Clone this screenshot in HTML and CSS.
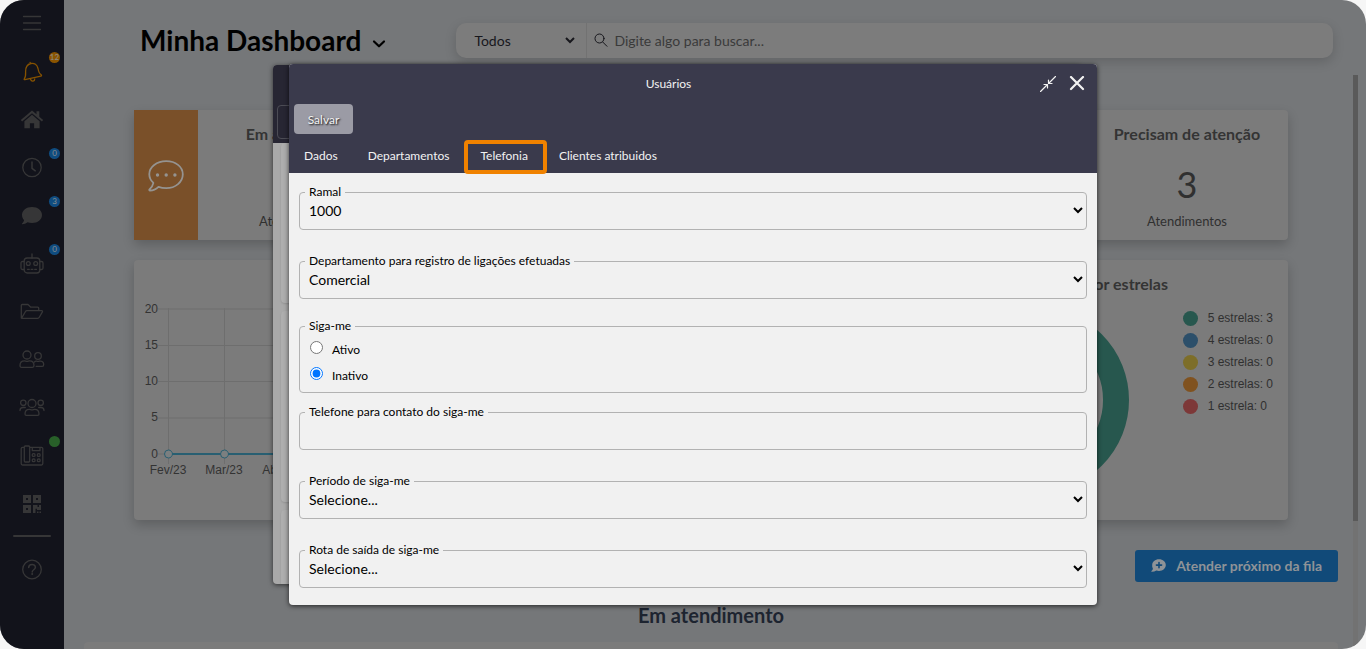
FILE: index.html
```html
<!DOCTYPE html>
<html lang="pt-BR">
<head>
<meta charset="utf-8">
<meta name="viewport" content="width=device-width, initial-scale=1">
<title>Minha Dashboard</title>
<link rel="stylesheet" href="styles.css">
</head>
<body>
<div class="app">
  <nav class="sidebar" aria-label="Principal">
    <button class="nav-item" aria-label="Menu"><svg width="24" height="24" viewBox="0 0 24 24"><path d="M3.500 4.500h17M3.500 11h17M3.500 17.500h17"/></svg></button>
    <button class="nav-item nav-item--alert" aria-label="Notificações"><svg width="24" height="24" viewBox="0 0 24 24"><path d="M4.300 18.800c1.600-2 1.400-4.300 1.300-7.200C5.500 7 7.500 4.300 10.800 3.500c3.600-.8 6.400 1.200 7.200 5 .6 3.200 1 5.200 3.200 6.300.6.400.3 1.300-.3 1.400L5 19.700c-.6.100-1.100-.4-.7-.9zM10.300 3.500l-.2-1.200M10.500 19.200c1 3 4.300 2.300 4.300-.8"/></svg><span class="badge badge--orange">12</span></button>
    <button class="nav-item" aria-label="Início"><svg width="24" height="24" viewBox="0 0 24 24"><path class="fill" d="M12 2.500 16.500 6.300V3.300h2.800v5.400l3.900 3.300-1.300 1.500L12 5.200l-9.900 8.300L.8 12z"/><path class="fill" d="M12 6.800l7.600 6.400v7.100h-5.500v-5H9.900v5H4.400v-7.100z"/></svg></button>
    <button class="nav-item" aria-label="Espera"><svg width="24" height="24" viewBox="0 0 24 24"><circle cx="12" cy="11.500" r="9.200"/><path d="M12 6v6.300l3.300 2.500" stroke-width="1.500"/></svg><span class="badge">0</span></button>
    <button class="nav-item" aria-label="Conversas"><svg width="24" height="24" viewBox="0 0 24 24"><path class="fill" d="M12 3c5.700 0 10 3.500 10 8s-4.300 8-10 8c-1.600 0-3.100-.3-4.400-.8C6 19.500 4 20.200 2.300 20.200c-.4 0-.5-.4-.2-.7 1-.9 1.700-2 2-3.200C2.800 14.800 2 13 2 11c0-4.500 4.300-8 10-8z"/></svg><span class="badge">3</span></button>
    <button class="nav-item" aria-label="Robôs"><svg width="24" height="24" viewBox="0 0 24 24"><path d="M12 2v4"/><rect x="4.200" y="6" width="15.600" height="15" rx="3"/><path d="M4 9.500H2.500c-.9 0-1.500.6-1.500 1.500v5c0 .9.600 1.500 1.500 1.500H4M20 9.500h1.500c.9 0 1.500.6 1.500 1.500v5c0 .9-.6 1.500-1.500 1.500H20"/><circle cx="8.300" cy="11.500" r="1.900"/><circle cx="15.700" cy="11.500" r="1.900"/><path d="M7.500 17.300h1.800M11.100 17.300h1.800M14.700 17.300h1.800"/></svg><span class="badge">0</span></button>
    <button class="nav-item" aria-label="Arquivos"><svg width="24" height="24" viewBox="0 0 24 24"><path d="M1.300 18V5.500C1.300 4.900 1.700 4.500 2.300 4.500H8l2.800 2.700h6.900c.6 0 1 .4 1 1v2.500M1.600 18.200l3.900-6.700c.3-.5.700-.8 1.300-.8h14.900c.7 0 1 .6.700 1.200l-3.100 5.400c-.4.700-.8 1-1.600 1H2.300c-.5 0-.8 0-.7-.1z"/></svg></button>
    <button class="nav-item" aria-label="Usuários"><svg width="26" height="24" viewBox="0 0 26 24"><circle cx="8" cy="7" r="4"/><path d="M1 17.500c0-3 1.800-4.600 4.500-4.600.9 0 1.500.5 2.500.5s1.600-.5 2.500-.5c2.700 0 4.500 1.600 4.500 4.600 0 1.200-.5 1.800-1.500 1.800h-11c-1 0-1.500-.6-1.500-1.800z"/><circle cx="19" cy="8" r="3.300"/><path d="M15.500 14c.6-.7 1.300-1 2-.8 1 .3 2 .3 3 0 2.500-.4 4.200 1 4.200 3.300 0 1.300-.4 1.900-1.500 1.900h-6"/></svg></button>
    <button class="nav-item" aria-label="Grupos"><svg width="26" height="24" viewBox="0 0 26 24"><circle cx="13" cy="7.500" r="4"/><path d="M6 18c0-3 1.800-4.600 4.300-4.600.9 0 1.700.5 2.700.5s1.800-.5 2.700-.5C18.200 13.400 20 15 20 18c0 .9-.4 1.300-1.200 1.300H7.200C6.400 19.300 6 18.900 6 18z"/><circle cx="4.300" cy="6.800" r="2.700"/><circle cx="21.700" cy="6.800" r="2.700"/><path d="M1 14.500c0-2 1-3 3-3h2.300M25 14.500c0-2-1-3-3-3h-2.300"/></svg></button>
    <button class="nav-item" aria-label="Telefonia"><svg width="24" height="24" viewBox="0 0 24 24"><rect x="4.300" y="2" width="5.400" height="16" rx="1"/><path d="M4 3.300H2.600C1.700 3.300 1.200 3.900 1.200 4.700V19.500c0 .9.500 1.500 1.400 1.500H21.400c.9 0 1.400-.6 1.400-1.500V4.700c0-.8-.5-1.400-1.400-1.400H10M12.300 3.500v3.200h7.700V3.500"/><rect x="12.300" y="9.700" width="2.700" height="2.700" rx="1"/><rect x="17.400" y="9.700" width="2.700" height="2.700" rx="1"/><rect x="12.300" y="15" width="2.700" height="2.700" rx="1"/><rect x="17.400" y="15" width="2.700" height="2.700" rx="1"/></svg><span class="badge badge--green"></span></button>
    <button class="nav-item" aria-label="QR Code"><svg width="24" height="24" viewBox="0 0 24 24"><path class="fill" fill-rule="evenodd" d="M3 3h8v8H3zM6 6v2h2V6zM13 3h8v8h-8zM16 6v2h2V6zM3 13h8v8H3zM6 16v2h2v-2zM13 13h4.500v2H19v-2h2v5h-4v-1.300h-1.500V21H13zM17 19.500h1.500V21H17zM19.500 19.500H21V21h-1.500z"/></svg></button>
    <hr class="nav-divider">
    <button class="nav-item" aria-label="Ajuda"><svg width="24" height="24" viewBox="0 0 24 24"><circle cx="12" cy="12.500" r="9.300"/><path d="M8.700 10.500c0-4 6.700-4 6.700-.2 0 2.500-3.200 2.400-3.200 4.700" stroke-width="1.500"/><circle class="fill" cx="12.200" cy="17" r="1"/></svg></button>
  </nav>

  <main class="main">
    <header class="topbar">
      <h1 class="title">Minha Dashboard</h1>
      <button class="title-toggle" aria-label="Trocar dashboard"><svg width="14" height="10" viewBox="0 0 14 10"><path d="M2 2.500l5 4.800 5-4.800"/></svg></button>
      <form class="search" role="search">
        <select class="search-scope" aria-label="Escopo da busca"><option>Todos</option></select>
        <label class="search-box"><svg width="14" height="14" viewBox="0 0 14 14"><circle cx="5.500" cy="5.500" r="4.500"/><path d="M8.700 9l4.300 4.300"/></svg><input type="text" placeholder="Digite algo para buscar..." aria-label="Buscar"></label>
      </form>
    </header>

    <section class="panels">
      <div class="stats">
        <article class="stat">
          <div class="stat-icon"><svg width="36" height="32" viewBox="0 0 36 32"><path d="M18.200 1.200C8.700 1.200 1.300 7 1.300 14.200c0 3.300 1.500 6.300 4.100 8.600-.5 2.600-2 4.800-3.900 6.500-.5.500-.2 1.200.5 1.200 3.300 0 6.300-1.600 8.500-3.700 2.300.9 4.900 1.400 7.700 1.400 9.400 0 16.600-6.200 16.600-13.900S27.600 1.200 18.200 1.200z"/><g class="dots"><circle cx="9.500" cy="15" r="1.700"/><circle cx="18.200" cy="15" r="1.700"/><circle cx="26.900" cy="15" r="1.700"/></g></svg></div>
          <div class="stat-body"><h2>Em andamento</h2><strong>0</strong><span>Atendimentos</span></div>
        </article>
        <article class="stat"></article>
        <article class="stat"></article>
        <article class="stat">
          <div class="stat-icon"></div>
          <div class="stat-body"><h2>Precisam de atenção</h2><strong>3</strong><span>Atendimentos</span></div>
        </article>
      </div>
      <div class="charts">
        <article class="card">
          <svg class="line-chart" height="260">
            <path class="grid" d="M24 49H540M24 85.500H540M24 121.500H540M24 158H540M24 194H540M34.500 48v156M90.500 48v156M146.500 48v156"/>
            <path class="series" d="M34.500 194H540"/>
            <circle class="point" cx="34.500" cy="194" r="4"/><circle class="point" cx="90.500" cy="194" r="4"/><circle class="point" cx="146.500" cy="194" r="4"/>
            <g text-anchor="end"><text x="24" y="53">20</text><text x="24" y="89">15</text><text x="24" y="125">10</text><text x="24" y="161">5</text><text x="24" y="198">0</text></g>
            <g text-anchor="middle"><text x="34" y="214">Fev/23</text><text x="90" y="214">Mar/23</text><text x="146" y="214">Abr/23</text></g>
          </svg>
        </article>
        <article class="card rating">
          <h2>por estrelas</h2>
          <div class="rating-body">
            <svg width="186" height="186" viewBox="0 0 186 186"><circle class="ring" cx="93" cy="93" r="80"/></svg>
            <ul class="legend">
              <li class="s5">5 estrelas: 3</li>
              <li class="s4">4 estrelas: 0</li>
              <li class="s3">3 estrelas: 0</li>
              <li class="s2">2 estrelas: 0</li>
              <li class="s1">1 estrela: 0</li>
            </ul>
          </div>
        </article>
      </div>
    </section>

    <section class="queue">
      <button class="next"><svg width="15" height="13" viewBox="0 0 15 13"><path class="bubble" d="M8 .3c3.900 0 6.800 2.500 6.800 5.800S11.900 12 8 12c-.9 0-1.800-.1-2.600-.4-1.300.8-2.900 1.200-4.600 1.200-.5 0-.6-.4-.3-.7.800-.7 1.300-1.500 1.400-2.400A5.500 5.500 0 0 1 1.200 6.100C1.200 2.800 4.100.3 8 .3z"/><path class="plus" d="M8 3.500v5.200M5.400 6.100h5.200"/></svg>Atender próximo da fila</button>
      <h2>Em atendimento</h2>
      <div class="list-panel"></div>
    </section>
    <div class="scroll-track"><div class="scroll-thumb"></div></div>
  </main>

  <div class="window-back"><div class="window-back-head"><span class="window-back-button"></span></div><div class="window-back-body"><i></i><i></i><i></i></div></div>

  <section class="modal" role="dialog" aria-labelledby="modal-title">
    <header class="modal-head">
      <div class="modal-bar">
        <h2 id="modal-title">Usuários</h2>
        <button class="modal-icon" aria-label="Recolher"><svg width="16" height="16" viewBox="0 0 16 16"><path d="M.5 15.500L7 9M15.500.5L9 7" stroke-width="1.200"/><path d="M4 8.500H7.500V12M8.500 4V7.500H12" stroke-width="1.200"/></svg></button>
        <button class="modal-icon" aria-label="Fechar"><svg width="16" height="16" viewBox="0 0 16 16"><path d="M2 1l12 12M14 1L2 13" stroke-width="2.200"/></svg></button>
      </div>
      <button class="save">Salvar</button>
      <div class="tabs" role="tablist">
        <button class="tab" role="tab">Dados</button>
        <button class="tab" role="tab">Departamentos</button>
        <button class="tab tab--marked" role="tab" aria-selected="true">Telefonia</button>
        <button class="tab" role="tab">Clientes atribuidos</button>
      </div>
    </header>
    <form class="form">
      <fieldset class="field"><legend><label for="ramal">Ramal</label></legend><select id="ramal"><option>1000</option></select></fieldset>
      <fieldset class="field field--close"><legend><label for="depto">Departamento para registro de ligações efetuadas</label></legend><select id="depto"><option>Comercial</option></select></fieldset>
      <fieldset class="field field--radios"><legend>Siga-me</legend>
        <label class="radio"><input type="radio" name="siga">Ativo</label>
        <label class="radio"><input type="radio" name="siga" checked>Inativo</label>
      </fieldset>
      <fieldset class="field"><legend><label for="tel">Telefone para contato do siga-me</label></legend><input id="tel" class="text" type="text"></fieldset>
      <fieldset class="field"><legend><label for="periodo">Período de siga-me</label></legend><select id="periodo"><option>Selecione...</option></select></fieldset>
      <fieldset class="field"><legend><label for="rota">Rota de saída de siga-me</label></legend><select id="rota"><option>Selecione...</option></select></fieldset>
    </form>
  </section>
</div>
</body>
</html>
```
FILE: styles.css
```css
* { box-sizing: border-box; }
body { margin: 0; background: #f6f6f6; font-family: Lato, sans-serif; font-size: 14px; color: #303030; }
h1, h2, ul { margin: 0; padding: 0; }
button, input, select { font: inherit; color: inherit; }
button { border: 0; background: none; padding: 0; }
svg { display: block; fill: none; stroke: currentColor; stroke-linecap: round; stroke-linejoin: round; }

.app { position: relative; display: flex; height: 100vh; overflow: hidden; border-radius: 24px; background: #757779; }

.sidebar { flex: none; display: flex; flex-direction: column; width: 64px; background: #12131b; color: #363637; }
.nav-item { position: relative; display: grid; place-items: center; height: 48px; }
.nav-item svg { stroke-width: 1.300; }
.nav-item .fill { fill: currentColor; stroke: none; }
.nav-item--alert { color: #855200; }
.nav-divider { width: 38px; height: 2px; margin: 7px auto 8px; border: 0; border-radius: 1px; background: #363637; }
.badge { position: absolute; top: 4px; right: 4px; width: 11px; height: 11px; border-radius: 50%; background: #0f4c80; color: #8c8c8c; font-size: 8px; line-height: 11px; text-align: center; }
.badge--orange { background: #8a5400; }
.badge--green { background: #286029; }

.main { position: relative; flex: 1; min-width: 0; }
.topbar { display: flex; align-items: center; padding: 23px 33px 0 76px; }
.title { color: #000; font-size: 28px; line-height: 35px; }
.title-toggle { margin: 6px 70px 0 11px; color: #000; }
.title-toggle svg { stroke-width: 2.200; }
.search { flex: 1; display: flex; height: 35px; border-radius: 10px; background: #7c7c7c; box-shadow: 0 4px 12px rgba(0, 0, 0, .16); }
.search-scope { width: 122px; margin-right: 8px; padding: 0 0 0 14px; border: 0; background: transparent; color: #17171c; }
.search-box { flex: 1; display: flex; gap: 6px; padding: 0 7px; border-left: 1px solid #727272; color: #17171c; }
.search-box svg { margin-top: 10px; }
.search-box input { flex: 1; padding: 0; border: 0; background: transparent; outline: 0; }
.search-box input::placeholder { color: #3a3a3a; opacity: 1; }

.panels { display: grid; gap: 20px; padding: 52px 78px 0 70px; }
.stats { display: grid; grid-template-columns: repeat(4, 1fr); gap: 30px; }
.charts { display: grid; grid-template-columns: 1fr 1fr; gap: 30px; }
.stat, .card { border-radius: 4px; background: #7b7b7b; box-shadow: 0 5px 12px rgba(0, 0, 0, .2); }
.stat { display: flex; height: 130px; }
.stat-icon { display: grid; place-items: center; width: 64px; background: #7a5029; color: #959390; }
.stat-icon svg { margin-top: 2px; stroke-width: 1.800; }
.dots { fill: currentColor; stroke: none; }
.stat-body { flex: 1; display: flex; flex-direction: column; align-items: center; padding-top: 14px; white-space: nowrap; }
.stat-body h2, .rating h2 { font-size: 16px; line-height: 20px; color: #343434; }
.stat-body strong { margin: 18px 0 7px; font-size: 36px; font-weight: 400; line-height: 44px; }
.stat-body span { font-size: 13px; line-height: 16px; }

.line-chart { width: 100%; }
.line-chart text { fill: #333; stroke: none; font: 12px "Liberation Sans", Arial, sans-serif; }
.grid { stroke: #6e6e6e; stroke-linecap: butt; }
.series { stroke: #285f72; stroke-width: 2; }
.point { fill: #7b7f80; stroke: #285f72; }

.rating { padding: 14px 15px 0 0; }
.rating h2 { margin: 0 105px 13px 0; text-align: right; }
.rating-body { display: flex; justify-content: flex-end; gap: 54px; }
.ring { stroke: #27574e; stroke-width: 26; }
.legend { list-style: none; font: 12px/22px "Liberation Sans", Arial, sans-serif; }
.legend li { display: flex; align-items: center; gap: 10px; }
.legend li::before { content: ""; width: 15px; height: 15px; border-radius: 50%; background: currentColor; }
.legend .s5::before { background: #27574e; }
.legend .s4::before { background: #2c4f6a; }
.legend .s3::before { background: #7d6e29; }
.legend .s2::before { background: #80521f; }
.legend .s1::before { background: #7d3838; }

.queue { display: flex; flex-direction: column; padding: 30px 28px 0 20px; }
.next { align-self: flex-end; display: flex; align-items: center; gap: 10px; height: 32px; padding: 0 16px 1px; border-radius: 3px; background: #114a79; color: #8f9397; font-weight: 700; }
.bubble { fill: currentColor; stroke: none; }
.plus { stroke: #114a79; stroke-width: 1.600; }
.queue h2 { margin: 21px 0 15px; color: #1d2430; font-size: 20px; line-height: 24px; text-align: center; }
.list-panel { height: 100px; border-radius: 4px; background: #7b7b7b; }
.scroll-track { position: absolute; top: 75px; right: 8px; bottom: 0; width: 5px; background: #727272; }
.scroll-thumb { height: 446px; background: #5a5a5a; }

.window-back { position: absolute; top: 65px; left: 273px; right: 285px; height: 519px; border-radius: 4px; background: #a9a9a9; box-shadow: 0 1px 5px rgba(0, 0, 0, .6); overflow: hidden; }
.window-back-head { height: 78px; padding: 40px 4px 0; background: #272633; }
.window-back-button { display: block; width: 60px; height: 34px; border: 1px solid #4c4c55; border-radius: 4px; }
.window-back-body { display: grid; grid-template-rows: 160px 191px 191px; gap: 8px; padding-left: 8px; }
.window-back-body i { border-radius: 4px; background: #aeaeae; box-shadow: 0 1px 2px rgba(0, 0, 0, .12); }

.modal { position: absolute; top: 64px; left: 289px; right: 269px; border-radius: 4px; background: #f1f1f1; color: #000; box-shadow: 0 1px 5px rgba(0, 0, 0, .7); font-size: 12px; }
.modal-head { padding: 4px 0 0 5px; border-radius: 4px 4px 0 0; background: #3a3a4c; color: #f2f2f2; }
.modal-bar { display: flex; align-items: center; gap: 13px; height: 31px; padding: 0 12px 0 16px; }
.modal-bar h2 { flex: 1; font-size: 12px; font-weight: 400; text-align: center; }
.save { width: 59px; height: 30px; margin-top: 5px; border-radius: 4px; background: #9b9ba5; text-shadow: 1px 1px 2px #000; }
.tabs { display: flex; height: 39px; padding-bottom: 4px; }
.tab { position: relative; padding: 7px 15px 0; }
.tab:first-child { padding-left: 10px; }
.tab--marked { padding: 7px 16px 0; }
.tab--marked::after { content: ""; position: absolute; inset: 6px -3px -5px 0; border: 4px solid #f08200; border-radius: 4px; }

.form { padding: 12px 10px 17px; }
.field { min-width: 0; margin: 0 0 24px; padding: 0 0 7px; border: 1px solid #b2b2b2; border-radius: 4px; }
.field:last-child { margin-bottom: 0; }
.field--close { margin-bottom: 20px; }
.field--radios { margin-bottom: 12px; padding: 3px 0 4px; }
.field legend { margin-left: 5px; padding: 0 4px; line-height: 14px; }
.field select, .text { display: block; width: 100%; height: 23px; border: 0; background: transparent; font-size: 14px; }
.field select { padding: 0 2px 0 5px; }
.radio { display: flex; align-items: center; gap: 9px; height: 26px; padding-left: 10px; }
.radio input { width: 13px; height: 13px; margin: 0 0 4px; }
```
